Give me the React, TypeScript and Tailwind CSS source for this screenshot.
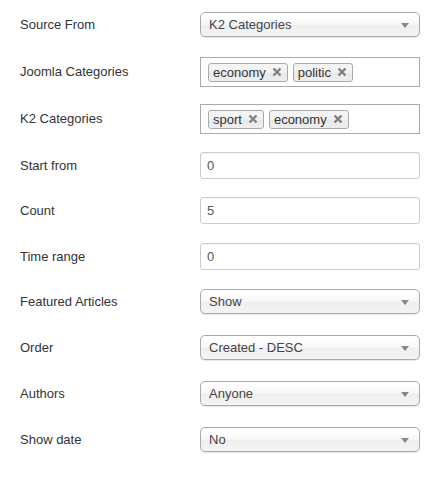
import React from 'react';

const font = { fontFamily: '"Liberation Sans", Arial, sans-serif' };

const Select = ({ value }: { value: string }) => (
  <div className="relative flex h-[25px] w-[220px] items-center rounded-[5px] border border-[#aaa] bg-[linear-gradient(#fff_20%,#f6f6f6_50%,#eee_52%,#f4f4f4_100%)] pl-[8px] text-[13px] text-[#444] shadow-[0_1px_1px_rgba(0,0,0,0.1)]">
    <span>{value}</span>
    <svg className="absolute right-[10px] top-[10px]" width="8" height="5" viewBox="0 0 8 5">
      <path d="M0 0h8L4 5z" fill="#888" />
    </svg>
  </div>
);

const Input = ({ value }: { value: string }) => (
  <div className="flex h-[27px] w-[220px] items-center rounded-[3px] border border-[#ccc] bg-white pl-[6px] text-[13px] text-[#555] shadow-[inset_0_1px_1px_rgba(0,0,0,0.04)]">
    {value}
  </div>
);

const Tag = ({ label }: { label: string }) => (
  <div className="flex h-[19px] items-center gap-[6px] rounded-[3px] border border-[#aaa] bg-[linear-gradient(#f4f4f4_20%,#f0f0f0_50%,#e8e8e8_52%,#eee_100%)] pl-[4px] pr-[5px] text-[13px] leading-[13px] text-[#333]">
    <span>{label}</span>
    <svg width="10" height="10" viewBox="0 0 10 10">
      <path d="M1.5 1.5l7 7M8.5 1.5l-7 7" stroke="#808080" strokeWidth="2.4" />
    </svg>
  </div>
);

const Tags = ({ items }: { items: string[] }) => (
  <div className="flex h-[30px] w-[220px] items-center gap-[5px] border border-[#aaa] bg-white pl-[7px]">
    {items.map((t) => (
      <Tag key={t} label={t} />
    ))}
  </div>
);

const Row = ({ label, mb, children }: { label: string; mb: string; children: React.ReactNode }) => (
  <div className={`flex items-center ${mb}`}>
    <div className="w-[180px] text-[13px] text-[#333]">{label}</div>
    {children}
  </div>
);

export default function App() {
  return (
    <div className="min-h-[478px] w-[444px] bg-white px-[20px] pt-[12px]" style={font}>
      <Row label="Source From" mb="mb-[20px]">
        <Select value="K2 Categories" />
      </Row>
      <Row label="Joomla Categories" mb="mb-[17px]">
        <Tags items={['economy', 'politic']} />
      </Row>
      <Row label="K2 Categories" mb="mb-[18px]">
        <Tags items={['sport', 'economy']} />
      </Row>
      <Row label="Start from" mb="mb-[18px]">
        <Input value="0" />
      </Row>
      <Row label="Count" mb="mb-[19px]">
        <Input value="5" />
      </Row>
      <Row label="Time range" mb="mb-[19px]">
        <Input value="0" />
      </Row>
      <Row label="Featured Articles" mb="mb-[21px]">
        <Select value="Show" />
      </Row>
      <Row label="Order" mb="mb-[21px]">
        <Select value="Created - DESC" />
      </Row>
      <Row label="Authors" mb="mb-[21px]">
        <Select value="Anyone" />
      </Row>
      <Row label="Show date" mb="mb-[21px]">
        <Select value="No" />
      </Row>
    </div>
  );
}
